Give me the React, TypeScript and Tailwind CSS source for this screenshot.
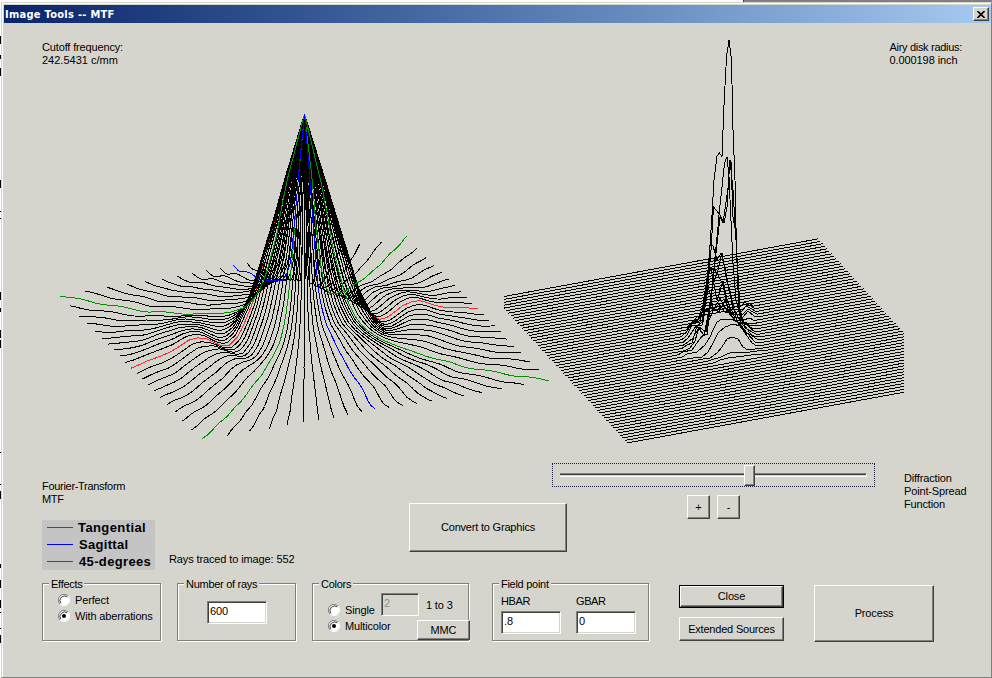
import React from 'react';

type Pt = [number, number];

const lerp = (table: Pt[], x: number): number => {
  if (x >= table[table.length - 1][0]) return table[table.length - 1][1];
  for (let i = 1; i < table.length; i++) {
    if (x <= table[i][0]) {
      const [x0, y0] = table[i - 1];
      const [x1, y1] = table[i];
      return y0 + ((y1 - y0) * (x - x0)) / (x1 - x0);
    }
  }
  return 0;
};

const toPoints = (pts: Pt[]) => pts.map(([x, y]) => `${x.toFixed(1)},${y.toFixed(1)}`).join(' ');

/* Modulation height against spatial frequency, per azimuth */
const TANGENTIAL: Pt[] = [[0, 224], [0.115, 156], [0.23, 87], [0.293, 47], [0.316, 37], [0.379, 13], [0.43, 5.5], [0.47, 6], [0.51, 10], [0.563, 16], [0.62, 18], [0.67, 17], [0.735, 12], [0.85, 5], [1, 0]];
const DIAGONAL: Pt[] = [[0, 224], [0.115, 145], [0.155, 102], [0.2, 72], [0.24, 47], [0.3, 28], [0.354, 19], [0.43, 13], [0.585, 6], [0.7, 3.5], [0.91, -1], [1.2, -1], [1.414, 0]];
const SAGITTAL: Pt[] = [[0, 224], [0.07, 170], [0.1, 140], [0.143, 104], [0.19, 64], [0.25, 46], [0.31, 35], [0.4, 29], [0.5, 21], [0.63, 14], [0.71, 11], [0.83, 7], [0.93, 0], [1, 0]];

const mtfHeight = (r: number, a: number) => {
  const c = Math.cos(2 * a);
  const side = c >= 0 ? lerp(TANGENTIAL, r) : lerp(SAGITTAL, r);
  const w = Math.abs(c);
  return side * w + lerp(DIAGONAL, r) * (1 - w);
};

const mtfLine = (k: number): Pt[] => {
  const a = (k * 4.5 * Math.PI) / 180;
  const edge = 1 / Math.max(Math.abs(Math.cos(a)), Math.abs(Math.sin(a)));
  const pts: Pt[] = [];
  for (let i = 0; i <= 44; i++) {
    const r = (edge * i) / 44;
    const u = r * Math.cos(a);
    const v = r * Math.sin(a);
    const ripple = 0.7 * Math.sin(r * 26 + k * 0.8) * Math.min(1, r * 1.2);
    pts.push([304.5 + 173.5 * u + 71 * v, 338 - 29.5 * u + 72 * v - mtfHeight(r, a) + ripple]);
  }
  return pts;
};

const mtfColor = (k: number) => {
  if (k % 40 === 0) return '#ff2828';
  if (k % 20 === 0) return '#0000ff';
  if (k % 10 === 0) return '#009000';
  return '#000';
};

const MTF_LINES = Array.from({ length: 80 }, (_, k) => ({ pts: toPoints(mtfLine(k)), color: mtfColor(k) }));
const MTF_ORDER = ['#ff2828', '#000', '#009000', '#0000ff'];

/* Central lobes of the point-spread surface, keyed by scan line */
const LOBES: Record<number, Pt[]> = {
  19: [[736, 306], [740, 307], [745, 302], [747, 304], [749, 303]],
  20: [[703, 314], [710, 308], [716, 311], [722, 306], [728, 309], [736, 309], [743, 309], [747, 305], [751, 306]],
  21: [[697, 317], [703, 316], [707, 308], [714, 309], [719, 304], [725, 312], [733, 313], [742, 311], [746, 306], [752, 309]],
  22: [[692, 322], [699, 319], [704, 308], [708, 285], [713, 308], [719, 312], [725, 300], [732, 314], [742, 315], [748, 309], [753, 312]],
  23: [[691, 324], [698, 320], [703, 305], [707, 278], [711, 269], [717, 300], [723, 281], [727, 300], [735, 318], [743, 317], [748, 311], [754, 316]],
  24: [[691, 324], [700, 322], [705, 298], [709, 268], [714, 268], [719, 277], [723, 285], [728, 310], [735, 320], [743, 320], [750, 318]],
  25: [[686, 332], [693, 323], [702, 320], [706, 298], [710, 245], [713, 246], [717, 260], [721, 253], [725, 268], [728, 285], [733, 308], [741, 322], [752, 324]],
  26: [[687, 335], [692, 325], [702, 325], [707, 295], [711, 250], [713.5, 207], [717, 211], [720, 215], [724, 223], [727, 207], [729, 173], [731, 162], [733, 217], [736, 234], [738, 290], [741, 323], [753, 326]],
  27: [[688, 338], [696, 326], [703, 322], [706, 300], [709, 262], [712, 215], [714, 180], [717, 156], [719.5, 153], [722, 156.5], [724, 105], [726.5, 57], [729, 40], [731.5, 60], [733, 130], [735, 180], [736.5, 250], [739, 310], [743, 323], [754, 329]],
  28: [[688, 342], [693, 338], [699, 327], [706, 332], [711, 300], [715, 257], [718, 227], [719.5, 210], [722, 187], [724.5, 163], [727, 157], [729, 177], [730.5, 210], [733, 263], [736, 300], [741, 320], [755, 332]],
  29: [[687, 345], [692, 343], [697, 326], [703, 334], [707, 335], [711, 300], [715, 262], [720, 217], [723, 223], [728, 188], [730, 160], [733, 190], [736, 240], [740, 309], [745, 328], [756, 334]],
  30: [[690, 348], [695, 341], [699, 327], [704, 336], [708, 315], [713, 285], [718, 270], [722, 253], [726, 277], [731, 295], [737, 322], [746, 333], [757, 337]],
  31: [[683, 352], [692, 350], [699, 340], [704, 334], [709, 320], [714, 309], [720, 298], [727, 311], [735, 320], [745, 326], [752, 336], [757, 339]],
  32: [[687, 354], [697, 352], [705, 345], [710, 337], [713, 330], [717, 322], [722, 319], [732, 319], [740, 324], [747, 333], [755, 342]],
  33: [[693, 358], [702, 357], [708, 352], [713, 343], [718, 333], [725, 327], [733, 324], [740, 326], [745, 333], [752, 343], [757, 346]],
  34: [[703, 359], [710, 358], [717, 353], [722, 347], [727, 339], [732, 337], [738, 339], [743, 347], [748, 350], [755, 349]],
  35: [[712, 359.5], [720, 357.5], [727, 354], [733, 352], [740, 352], [750, 352], [760, 350.5]],
  36: [[720, 360], [728, 358], [736, 357], [744, 356], [755, 354.5]],
};

const PSF_STEPS = 58;

const psfLine = (i: number): Pt[] => {
  const x0 = 494.6 + (132.4 * i) / PSF_STEPS;
  const y0 = 298.2 + (144.8 * i) / PSF_STEPS;
  const at = (x: number) => y0 - 0.1835 * (x - x0);
  const left = Math.max(504, x0);
  const right = Math.min(904, x0 + 323.4);
  const lobe = LOBES[i];
  if (!lobe) return [[left, at(left)], [right, at(right)]];
  const start = lobe[0][0] - 5;
  const end = lobe[lobe.length - 1][0] + 4;
  return [[left, at(left)], [start, at(start)], ...lobe, [end, at(end)], [right, at(right)]];
};

const PSF_LINES = Array.from({ length: PSF_STEPS + 1 }, (_, i) => toPoints(psfLine(i)));

function Plots() {
  return (
    <svg className="col-start-1 row-start-1 block" width="987" height="432" viewBox="4 23 987 432" fill="none" shapeRendering="crispEdges">
      {MTF_ORDER.map((color) =>
        MTF_LINES.filter((l) => l.color === color).map((l) => <polyline key={l.pts} points={l.pts} stroke={color} />),
      )}
      {PSF_LINES.map((pts) => (
        <polyline key={pts} points={pts} stroke="#000" />
      ))}
    </svg>
  );
}

const raised = 'border border-t-white border-l-white border-r-[#404040] border-b-[#404040] shadow-[inset_-1px_-1px_0_#808080] bg-[#d6d5cd]';
const sunken = 'border border-t-[#808080] border-l-[#808080] border-r-white border-b-white shadow-[inset_1px_1px_0_#404040,inset_-1px_-1px_0_#d6d5cd] block pl-[2px] pt-[3px] leading-[13px]';

function Button({ className, children }: { className: string; children: React.ReactNode }) {
  return <button className={`${raised} flex items-center justify-center ${className}`}>{children}</button>;
}

function Group({ title, className, children }: { title: string; className: string; children: React.ReactNode }) {
  return (
    <section className={`h-[58px] border border-[#808080] shadow-[1px_1px_0_#fff,inset_1px_1px_0_#fff] ${className}`}>
      <h2 className="-mt-[6px] ml-[6px] h-[13px] w-fit bg-[#d6d5cd] px-[2px] tracking-[-0.28px]">{title}</h2>
      {children}
    </section>
  );
}

function Radio({ label, checked }: { label: string; checked?: boolean }) {
  return (
    <label className="flex h-4 items-center gap-[5px]">
      <svg className="shrink-0" width="12" height="12" viewBox="0 0 12 12" fill="none">
        <circle cx="6" cy="6" r="5" fill="#fff" />
        <path d="M2 10A5.5 5.5 0 0 1 10 2" stroke="#808080" />
        <path d="M2.8 9.2A4.6 4.6 0 0 1 9.2 2.8" stroke="#404040" />
        <path d="M10 2A5.5 5.5 0 0 1 2 10" stroke="#fff" />
        {checked && <circle cx="6" cy="6" r="2" fill="#000" />}
      </svg>
      <span className="whitespace-nowrap pt-px">{label}</span>
    </label>
  );
}

function LegendRow({ label, stroke, bar }: { label: string; stroke: string; bar: string }) {
  return (
    <li className="flex h-[17px] items-center">
      <span className={`mr-[5px] ml-[5px] h-px w-[26px] ${stroke}`} />
      <span className={bar}>{label}</span>
    </li>
  );
}

export default function App() {
  const fragments = [36, 55, 68, 180, 211, 218, 292, 308, 330, 340, 452, 484, 491, 564, 580, 600, 612, 628, 635];
  return (
    <div className="flex h-[678px] w-[992px] overflow-hidden bg-white font-['Liberation_Sans',Arial,sans-serif] text-[11px] leading-[13px] tracking-[-0.15px] text-black">
      <div className="h-full w-px shrink-0">
        <svg width="1" height="678" shapeRendering="crispEdges">
          {fragments.map((y, i) => (
            <rect key={y} x="0" y={y} width="1" height={[8, 4, 8, 8, 1, 1][i % 6]} fill="#000" />
          ))}
        </svg>
      </div>
      <div className="flex w-[991px] flex-col">
        <div className="flex h-[2px] shrink-0">
          <div className="w-[742px] bg-white" />
          <div className="w-px bg-[#404040]" />
          <div className="flex-1 bg-[#808080]" />
        </div>
        <main className="flex h-[676px] flex-col border border-t-[#d6d5cd] border-r-[#808080] border-b-[#808080] border-l-[#d6d5cd] bg-[#d6d5cd] shadow-[inset_1px_1px_0_#fff]">
          <header className="mt-[2px] ml-[2px] flex h-[18px] shrink-0 items-center justify-between bg-linear-to-r from-[#0a246a] to-[#a6caf0] pr-[2px] pl-px">
            <h1 className="font-['DejaVu_Sans_Condensed','DejaVu_Sans',sans-serif] text-[11px] font-bold tracking-[0.28px] whitespace-nowrap text-white">Image Tools -- MTF</h1>
            <button className={`flex h-[14px] w-4 items-center justify-center ${raised}`}>
              <svg width="8" height="7" viewBox="0 0 8 7" stroke="#000" strokeWidth="1.6">
                <path d="M.5 0 7.5 7M7.5 0 .5 7" />
              </svg>
            </button>
          </header>

          <div className="ml-[2px] grid h-[432px] shrink-0 grid-cols-[987px]">
            <Plots />
            <div className="col-start-1 row-start-1 flex justify-between pt-[18px] pr-[29px] pl-[38px]">
              <p>Cutoff frequency:<br /><span className="tracking-normal">242.5431 c/mm</span></p>
              <p className="tracking-[-0.3px]">Airy disk radius:<br /><span className="tracking-[-0.08px]">0.000198 inch</span></p>
            </div>
          </div>

          <div className="ml-[2px] flex h-[128px] shrink-0 items-start pl-[38px]">
            <div className="w-[367px] pt-[25px]">
              <p className="tracking-[-0.3px]">Fourier-Transform<br />MTF</p>
              <div className="mt-[14px] flex">
                <ul className="h-[50px] w-[113px] bg-[#c4c4c4] text-[13px] font-bold">
                  <li className="-mt-px h-0" />
                  <LegendRow label="Tangential" stroke="bg-[#ff0000]" bar="tracking-[0.4px]" />
                  <LegendRow label="Sagittal" stroke="bg-[#0000ff]" bar="tracking-[0.3px] pl-px" />
                  <LegendRow label="45-degrees" stroke="bg-[#008000]" bar="tracking-[0.35px] pl-px" />
                </ul>
                <p className="mt-[33px] ml-[14px] tracking-[-0.12px]">Rays traced to image: 552</p>
              </div>
            </div>
            <Button className="mt-[48px] h-[49px] w-[158px] tracking-[-0.2px]">Convert to Graphics</Button>
            <div className="-ml-[15px] w-[323px] pt-[8px]">
              <div className="flex h-6 items-center border border-dotted border-[#202040] px-[7px]">
                <div className="h-[4px] w-[188px] border-t border-b border-t-[#808080] border-b-white bg-[#404040] shadow-[inset_0_-1px_0_#d6d5cd]" />
                <div className={`z-10 -mx-[4px] h-[21px] w-[11px] ${raised}`} />
                <div className="h-[4px] flex-1 border-t border-r border-b border-t-[#808080] border-r-white border-b-white bg-[#404040] shadow-[inset_0_-1px_0_#d6d5cd]" />
              </div>
              <div className="mt-2 ml-[135px] flex gap-[7px]">
                <Button className="h-6 w-[23px]">+</Button>
                <Button className="h-6 w-[23px]">-</Button>
              </div>
            </div>
            <p className="mt-[17px] ml-[29px]">Diffraction<br />Point-Spread<br />Function</p>
          </div>

          <div className="ml-[2px] flex shrink-0 items-start pl-[38px]">
            <Group title="Effects" className="w-[119px]">
              <div className="mt-px pl-[15px]">
                <Radio label="Perfect" />
                <Radio label="With aberrations" checked />
              </div>
            </Group>
            <Group title="Number of rays" className="ml-4 w-[119px]">
              <span className={`${sunken} mt-[10px] ml-[29px] h-[23px] w-[60px] bg-white`}>600</span>
            </Group>
            <Group title="Colors" className="ml-4 w-[157px]">
              <div className="mt-[2px] flex">
                <div className="w-[68px] pt-[9px] pl-[15px]">
                  <Radio label="Single" />
                  <Radio label="Multicolor" checked />
                </div>
                <div className="flex w-[89px] shrink-0 flex-col">
                  <div className="flex">
                    <span className={`${sunken} h-[23px] w-[38px] text-[#909090]`}>2</span>
                    <span className="mt-[6px] ml-[7px]">1 to 3</span>
                  </div>
                  <Button className="mt-1 ml-[36px] h-5 w-[53px]">MMC</Button>
                </div>
              </div>
            </Group>
            <Group title="Field point" className="ml-[23px] w-[157px]">
              <div className="mt-[4px] ml-2 flex gap-[15px]">
                <div><p className="tracking-[-0.4px]">HBAR</p><span className={`${sunken} mt-[3px] h-[23px] w-[60px] bg-white`}>.8</span></div>
                <div><p className="tracking-[-0.4px]">GBAR</p><span className={`${sunken} mt-[3px] h-[23px] w-[60px] bg-white`}>0</span></div>
              </div>
            </Group>
            <div className="mt-[2px] ml-[30px] flex flex-col gap-[9px]">
              <div className="border border-black"><Button className="h-[21px] w-[103px]">Close</Button></div>
              <Button className="h-6 w-[105px] tracking-[-0.2px]">Extended Sources</Button>
            </div>
            <Button className="mt-[2px] ml-[30px] h-[57px] w-[120px]">Process</Button>
          </div>
        </main>
      </div>
    </div>
  );
}
